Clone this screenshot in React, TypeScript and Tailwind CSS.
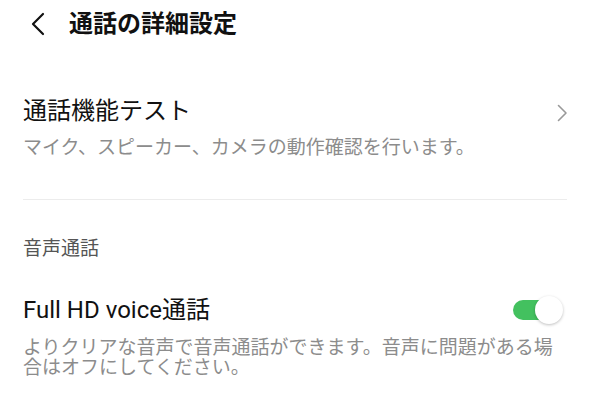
export default function App() {
  return (
    <div className="w-[590px] h-[408px] bg-white overflow-hidden font-['Roboto','Noto_Sans_CJK_JP',sans-serif] text-[#111]">
      {/* Header */}
      <div className="h-12 flex items-center pl-[28px]">
        <svg width="20" height="26" viewBox="0 0 20 26" className="text-[#111]">
          <path d="M15 3 L5 13 L15 23" fill="none" stroke="currentColor" strokeWidth="2.2" strokeLinecap="round" strokeLinejoin="round" />
        </svg>
        <h1 className="ml-[21px] text-[24px] leading-8 font-bold">通話の詳細設定</h1>
      </div>

      <div className="px-[23px]">
        {/* 通話機能テスト */}
        <div className="mt-[47px] flex items-center justify-between">
          <div>
            <div className="text-[24px] leading-8">通話機能テスト</div>
            <div className="mt-2 text-[19px] leading-[26px] text-[#8c8c8c]">
              マイク、スピーカー、カメラの動作確認を行います。
            </div>
          </div>
          <svg width="12" height="20" viewBox="0 0 12 20" className="self-start mt-[8px] mr-[-1px] text-[#999]">
            <path d="M2.5 2.5 L10 10 L2.5 17.5" fill="none" stroke="currentColor" strokeWidth="1.6" strokeLinecap="round" strokeLinejoin="round" />
          </svg>
        </div>

        <div className="mt-[38px] h-px bg-[#ececec]" />

        {/* 音声通話 */}
        <div className="mt-9 text-[19px] leading-[26px] text-[#555]">音声通話</div>

        <div className="mt-8">
          <div className="flex items-center justify-between">
            <div className="text-[24px] leading-8">Full HD voice通話</div>
            <div className="relative w-[50px] h-[28px] mr-[4px]">
              <div className="absolute left-0 top-[4px] w-[42px] h-[20px] rounded-full bg-[#43c15f]" />
              <div className="absolute right-0 top-0 w-[28px] h-[28px] rounded-full bg-white shadow-[0_1px_3px_rgba(0,0,0,0.25)]" />
            </div>
          </div>
          <p className="mt-[12px] text-[19px] leading-[20px] text-[#8c8c8c]">
            よりクリアな音声で音声通話ができます。音声に問題がある場合はオフにしてください。
          </p>
        </div>
      </div>
    </div>
  )
}
